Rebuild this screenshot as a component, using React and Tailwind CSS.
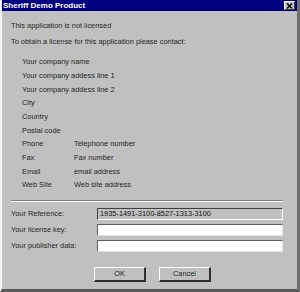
export default function App() {
    const contact = [
        ["Your company name"],
        ["Your company addess line 1"],
        ["Your company addess line 2"],
        ["City"],
        ["Country"],
        ["Postal code"],
        ["Phone", "Telephone number"],
        ["Fax", "Fax number"],
        ["Email", "email address"],
        ["Web Site", "Web site address"],
    ]

    return (
        <div className="w-[300px] h-[292px] bg-[#c0c0c0] flex flex-col border-l-2 border-l-[#f4f4f4] border-r-[3px] border-r-[#6f6f6f] border-b-[3px] border-b-[#5a5a5a] text-[7.4px] text-[#262626] font-['Liberation_Sans',Arial,sans-serif] overflow-hidden">
            {/* Title bar */}
            <div className="h-[11px] bg-[#000080] flex items-center justify-between pl-[1px] pr-[2px]">
                <span className="text-white font-bold text-[8px] leading-none">Sheriff Demo Product</span>
                <div className="w-[11px] h-[9px] bg-[#c0c0c0] border-t border-l border-t-white border-l-white border-b border-r border-b-[#404040] border-r-[#404040] flex items-center justify-center">
                    <svg width="7" height="6" viewBox="0 0 7 6">
                        <path d="M1 0.5 L6 5.5 M6 0.5 L1 5.5" stroke="#000" strokeWidth="1.3" />
                    </svg>
                </div>
            </div>

            {/* Body */}
            <div className="flex flex-col pl-[9px] pr-[14px]">
                <div className="mt-[10px] h-[10px] leading-[10px]">This application is not licensed</div>
                <div className="mt-[6px] h-[10px] leading-[10px]">To obtain a license for this application please contact:</div>

                <div className="mt-[8px] pl-[11px] flex flex-col">
                    {contact.map(([a, b]) => (
                        <div key={a} className="h-[13.7px] flex items-center whitespace-nowrap">
                            {b ? (
                                <>
                                    <span className="w-[52px] shrink-0">{a}</span>
                                    <span>{b}</span>
                                </>
                            ) : (
                                <span>{a}</span>
                            )}
                        </div>
                    ))}
                </div>

                <div className="mt-[8px] h-[2px] border-t border-t-[#808080] border-b border-b-white"></div>

                <div className="mt-[6px] flex flex-col gap-[4px]">
                    <div className="flex items-center h-[12px]">
                        <span className="w-[86px]">Your Reference:</span>
                        <div className="flex-1 h-[12px] bg-[#c0c0c0] border-t border-l border-t-[#404040] border-l-[#404040] border-b border-r border-b-white border-r-white flex items-center pl-[2px] text-[#111]">
                            1935-1491-3100-8527-1313-3100
                        </div>
                    </div>
                    <div className="flex items-center h-[12px]">
                        <span className="w-[86px]">Your license key:</span>
                        <div className="flex-1 h-[12px] bg-white border-t border-l border-t-[#606060] border-l-[#606060] border-b border-r border-b-[#e0e0e0] border-r-[#e0e0e0]"></div>
                    </div>
                    <div className="flex items-center h-[12px]">
                        <span className="w-[86px]">Your publisher data:</span>
                        <div className="flex-1 h-[12px] bg-white border-t border-l border-t-[#606060] border-l-[#606060] border-b border-r border-b-[#e0e0e0] border-r-[#e0e0e0]"></div>
                    </div>
                </div>

                <div className="mt-[15px] flex justify-center gap-[13px] pl-[11px]">
                    <button className="w-[52px] h-[15px] bg-[#c0c0c0] border-t border-l border-t-white border-l-white border-b-2 border-r-2 border-b-[#303030] border-r-[#303030] flex items-center justify-center text-[7.4px]">OK</button>
                    <button className="w-[52px] h-[15px] bg-[#c0c0c0] border-t border-l border-t-white border-l-white border-b-2 border-r-2 border-b-[#303030] border-r-[#303030] flex items-center justify-center text-[7.4px]">Cancel</button>
                </div>
            </div>
        </div>
    )
}
